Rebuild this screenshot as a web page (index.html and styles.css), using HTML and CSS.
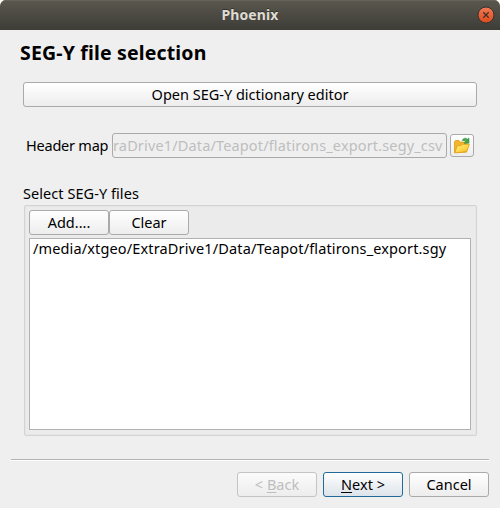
FILE: index.html
```html
<!DOCTYPE html>
<html lang="en">
<head>
<meta charset="utf-8">
<title>Phoenix</title>
<link rel="stylesheet" href="styles.css">
</head>
<body>
<div class="window">
  <header class="titlebar">
    <span class="title">Phoenix</span>
    <svg class="close" width="18" height="18" viewBox="0 0 18 18">
      <defs><linearGradient id="red" x1="0" y1="0" x2="0" y2="1"><stop offset="0" stop-color="#f37b55"/><stop offset="1" stop-color="#df4a1b"/></linearGradient></defs>
      <circle cx="9" cy="9" r="8" fill="url(#red)" stroke="#34332e" stroke-width="1"/>
      <path d="M6.3 6.3l5.4 5.4M11.7 6.3l-5.4 5.4" stroke="#40312a" stroke-width="1.3"/>
    </svg>
  </header>
  <main class="content">
    <h1 class="heading">SEG-Y file selection</h1>
    <button class="btn editor">Open SEG-Y dictionary editor</button>
    <div class="map-row">
      <label class="map-label">Header map</label>
      <div class="field">raDrive1/Data/Teapot/flatirons_export.segy_csv</div>
      <button class="btn browse" aria-label="Browse">
        <svg width="18" height="18" viewBox="0 0 18 18">
          <defs><linearGradient id="gold" x1="0" y1="0" x2="1" y2="1"><stop offset="0" stop-color="#fff29a"/><stop offset=".5" stop-color="#ffd84a"/><stop offset="1" stop-color="#f5b51c"/></linearGradient></defs>
          <path d="M1.5 15.5V4.5l1-1H6l1.2 1.6h6.3v10z" fill="#f3b62b" stroke="#d89a1c" stroke-width=".8"/>
          <path d="M1.7 16L4.2 8.8l4-.3 1.2-1.2h7L13.8 14.6z" fill="url(#gold)" stroke="#dc9d15" stroke-width=".8" stroke-linejoin="round"/>
          <path d="M9.2 3.5C10.3.8 13 .6 14.3 2.2L16 1v5.2h-5l1.7-1.5c-.9-1.2-2.2-1.3-3.5-1.2z" fill="#45a64a" stroke="#278538" stroke-width=".5"/>
        </svg>
      </button>
    </div>
    <div class="group-label">Select SEG-Y files</div>
    <section class="group">
      <div class="tools">
        <button class="btn small">Add....</button>
        <button class="btn small">Clear</button>
      </div>
      <div class="list">/media/xtgeo/ExtraDrive1/Data/Teapot/flatirons_export.sgy</div>
    </section>
  </main>
  <footer class="footer">
    <button class="btn small off" disabled><span>&lt; <u>B</u>ack</span></button>
    <button class="btn small primary"><span><u>N</u>ext &gt;</span></button>
    <button class="btn small">Cancel</button>
  </footer>
</div>
</body>
</html>
```
FILE: styles.css
```css
* { box-sizing: border-box; }
body { margin: 0; background: #fff; }
.window {
  width: 500px; height: 508px; overflow: hidden;
  display: flex; flex-direction: column;
  background: #efefef; border-radius: 6px 6px 0 0;
  font: 14.5px/20px "Noto Sans", "Open Sans", sans-serif; color: #000;
}
.titlebar {
  height: 30px; flex: none; display: grid; grid-template-columns: 1fr auto 1fr; align-items: center;
  padding-right: 5px; background: linear-gradient(#5a584e, #3d3c37);
  box-shadow: inset 0 1px #66645a;
}
.title { grid-column: 2; color: #dfdbd2; font-weight: 700; font-size: 14px; letter-spacing: .1px; margin-left: 5px; text-shadow: 0 -1px #33322d; }
.close { justify-self: end; }
.content { padding: 0 23px; height: 429px; flex: none; }
.heading { margin: 0 0 0 -3px; padding-top: 9px; height: 52px; font-size: 19.5px; line-height: 28px; font-weight: 700; letter-spacing: .16px; white-space: nowrap; }
.btn {
  display: flex; align-items: center; justify-content: center; height: 25px; padding: 0 0 2px;
  border: 1px solid #aaa; border-radius: 3px; background: linear-gradient(#fff, #ededed);
  font: inherit; color: #000; white-space: nowrap;
}
.editor { width: 454px; }
.small { width: 80px; }
.map-row { display: flex; align-items: center; margin-top: 26px; height: 25px; padding-left: 3px; }
.map-label { width: 86px; padding-bottom: 2px; letter-spacing: -.22px; white-space: nowrap; }
.field { width: 335px; height: 25px; border: 1px solid #aaa; border-radius: 3px; color: #bebebe; line-height: 23px; letter-spacing: .15px; white-space: nowrap; overflow: hidden; }
.browse { width: 24px; height: 23px; margin-left: 3px; padding: 0; }
.group-label { margin-top: 25px; height: 22px; letter-spacing: .06px; white-space: nowrap; }
.group { margin-left: 1px; width: 453px; height: 231px; padding: 4px; border: 1px solid #d3d3d3; border-radius: 2px; background: #ebebeb; box-shadow: inset 0 0 0 1px #e6e6e6; }
.tools { display: flex; margin-bottom: 3px; }
.list { width: 442px; height: 192px; border: 1px solid #b1b1b1; background: #fff; padding-left: 3px; line-height: 18px; letter-spacing: .14px; white-space: nowrap; }
.footer { margin: 0 11px; padding-top: 12px; border-top: 1px solid #b4b4b4; box-shadow: inset 0 1px #fff; display: flex; justify-content: flex-end; gap: 6px; }
.off { color: #bebebe; border-color: #c4c4c4; background: linear-gradient(#fbfbfb, #ededed); }
.primary { border-color: #206b99; background: linear-gradient(#fff, #dce3ea); }
u { text-decoration: underline; text-decoration-thickness: 1px; text-underline-offset: 2px; }
```
